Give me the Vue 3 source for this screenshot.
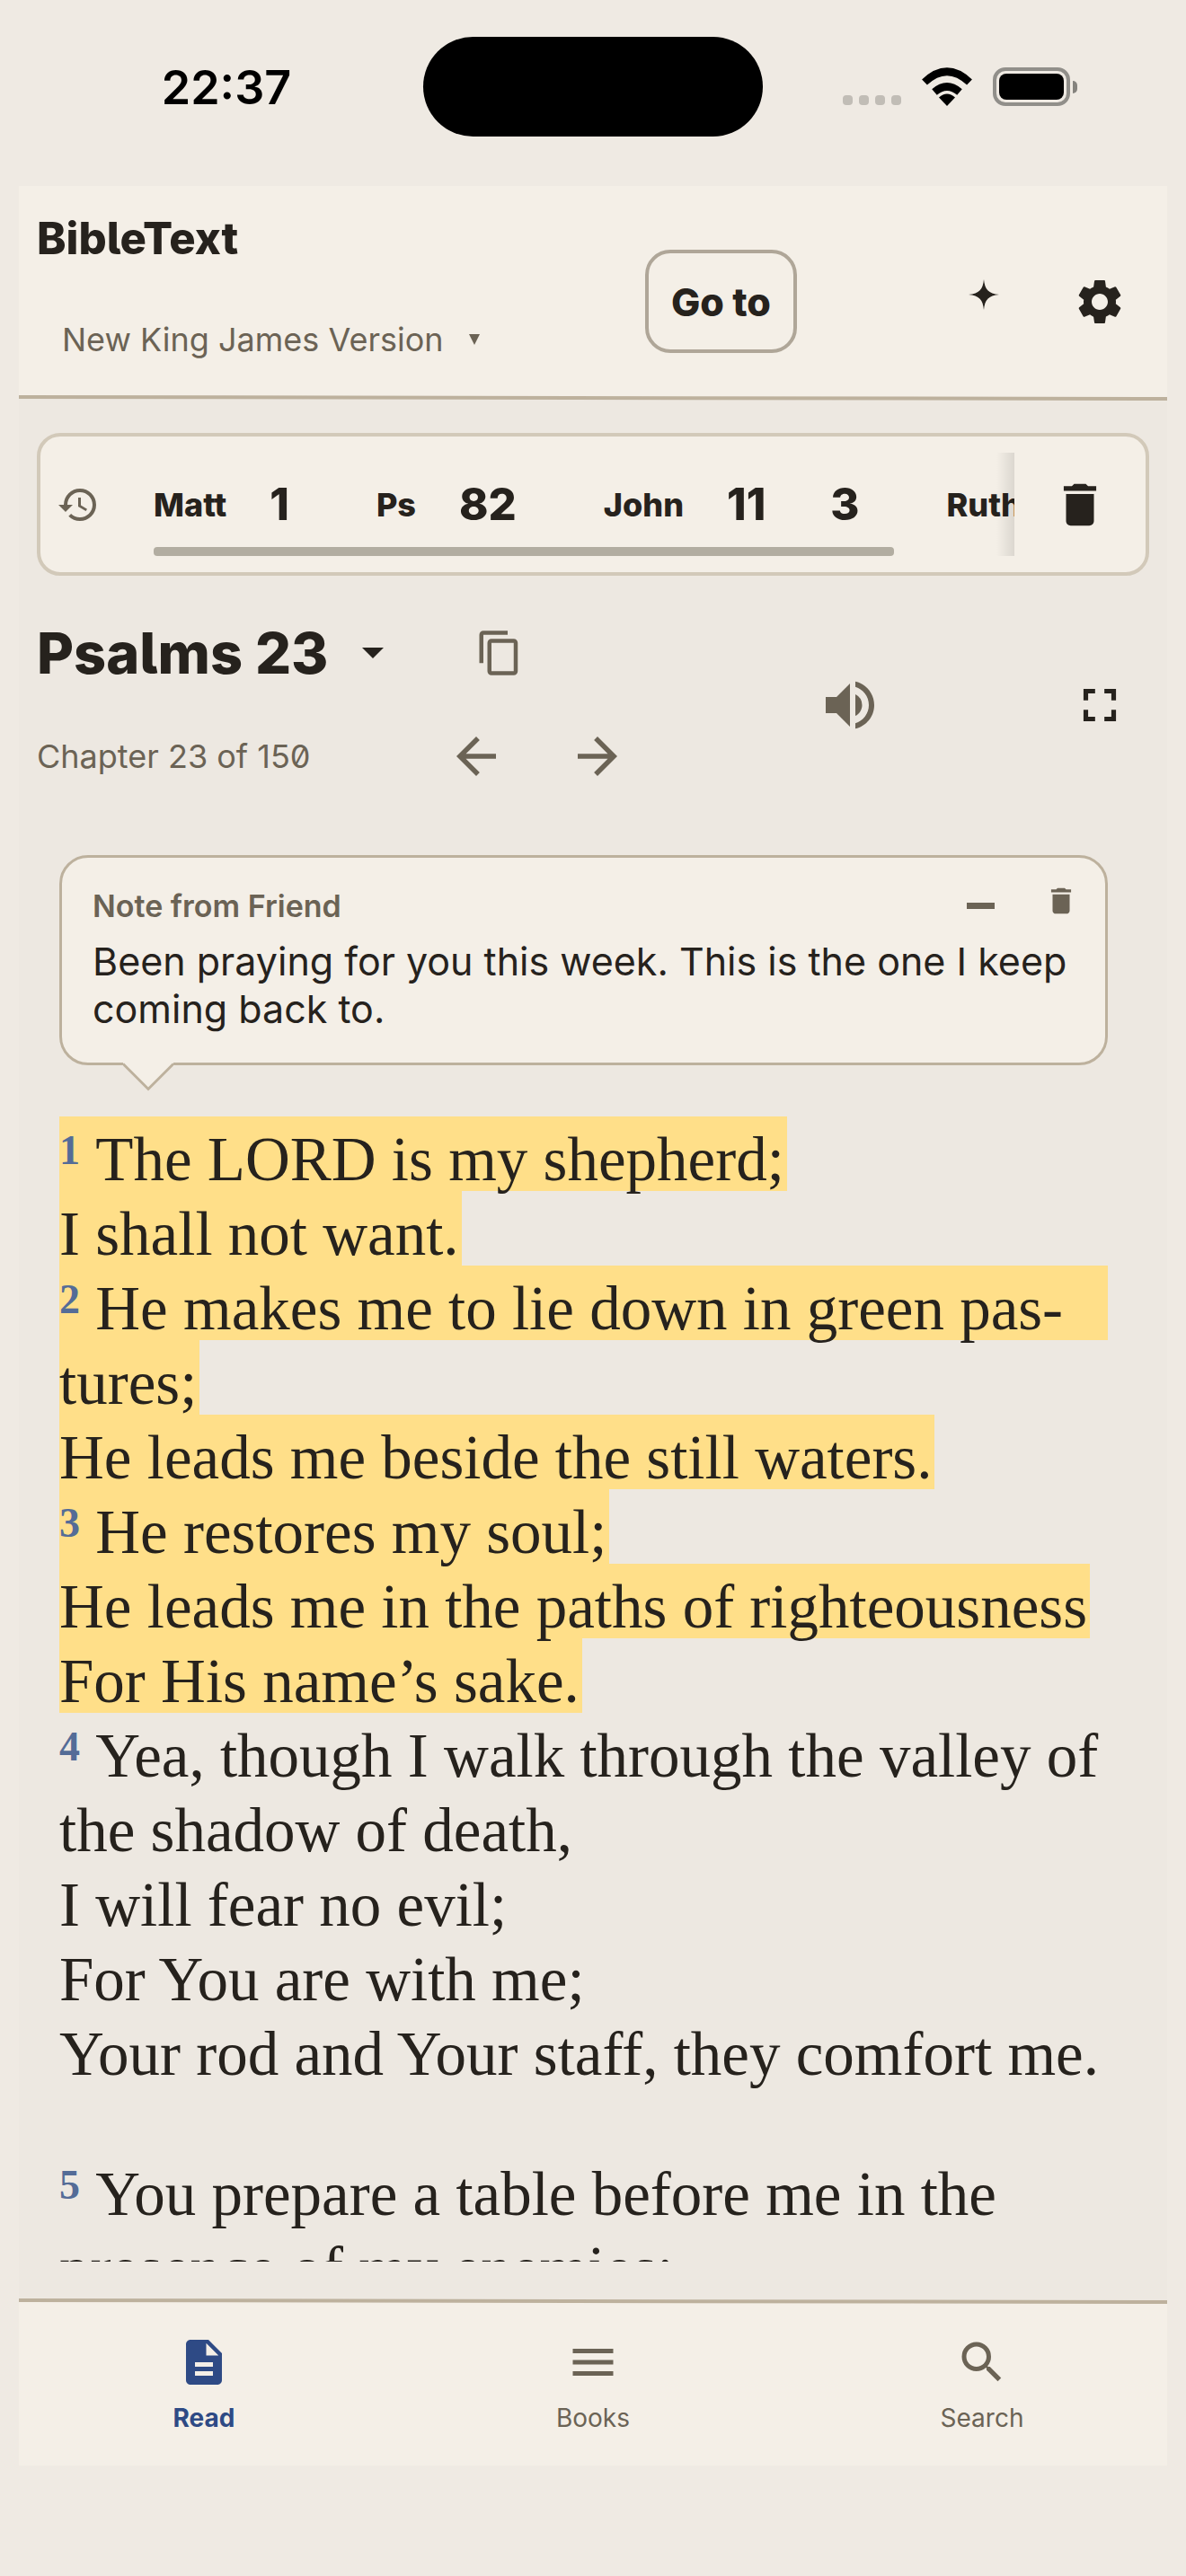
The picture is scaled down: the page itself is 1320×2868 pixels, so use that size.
<script setup>
import { ref } from 'vue'

const version = ref('New King James Version')

const history = [
  { book: 'Matt', chapters: [1] },
  { book: 'Ps', chapters: [82] },
  { book: 'John', chapters: [11, 3] },
  { book: 'Ruth', chapters: [1] },
]

const stanzas = [
  [
    { n: 1, text: 'The LORD is my shepherd;', mark: true },
    { text: 'I shall not want.', mark: true },
    { n: 2, text: 'He makes me to lie down in green pas-', mark: true, full: true },
    { text: 'tures;', mark: true },
    { text: 'He leads me beside the still waters.', mark: true },
    { n: 3, text: 'He restores my soul;', mark: true },
    { text: 'He leads me in the paths of righteousness', mark: true },
    { text: 'For His name’s sake.', mark: true },
    { n: 4, text: 'Yea, though I walk through the valley of' },
    { text: 'the shadow of death,' },
    { text: 'I will fear no evil;' },
    { text: 'For You are with me;' },
    { text: 'Your rod and Your staff, they comfort me.' },
  ],
  [
    { n: 5, text: 'You prepare a table before me in the' },
    { text: 'presence of my enemies;' },
  ],
]

const tabs = [
  { label: 'Read', active: true, icon: 'M14 2H6c-1.1 0-1.99.9-1.99 2L4 20c0 1.1.89 2 1.99 2H18c1.1 0 2-.9 2-2V8l-6-6zm2 16H8v-2h8v2zm0-4H8v-2h8v2zm-3-5V3.5L18.500 9H13z' },
  { label: 'Books', icon: 'M3 18h18v-2H3v2zm0-5h18v-2H3v2zm0-7v2h18V6H3z' },
  { label: 'Search', icon: 'M15.500 14h-.79l-.28-.27A6.470 6.470 0 0 0 16 9.500 6.500 6.500 0 1 0 9.500 16c1.610 0 3.090-.59 4.230-1.570l.27.28v.79l5 4.990L20.490 19l-4.990-5zm-6 0C7.010 14 5 11.990 5 9.500S7.010 5 9.500 5 14 7.010 14 9.500 11.990 14 9.500 14z' },
]

const trash = 'M6 19c0 1.1.9 2 2 2h8c1.1 0 2-.9 2-2V7.400H6V19zM19 4h-3.500l-1-1h-5l-1 1H5v2h14V4z'
</script>

<template>
  <div class="device">
    <div class="status">
      <span class="time">22:37</span>
      <div class="island"></div>
      <div class="indicators">
        <div class="dots"><i v-for="d in 4" :key="d"></i></div>
        <svg class="wifi" viewBox="0 0 58 43" aria-hidden="true">
          <path d="M29 43 L20 33.500 Q29 25.500 38 33.500Z" />
          <path d="M15 28.500 Q29 16.500 43 28.500" fill="none" stroke="#000" stroke-width="8.500" transform="translate(0 -1)" />
          <path d="M4 16.500 Q29 -7 54 16.500" fill="none" stroke="#000" stroke-width="8.500" />
        </svg>
        <div class="battery"><div class="charge"></div></div>
      </div>
    </div>

    <main class="app">
      <header class="top">
        <div class="brand">
          <h2>BibleText</h2>
          <label class="version">
            <select v-model="version" aria-label="Translation">
              <option>New King James Version</option>
            </select>
            <svg width="12" height="12" viewBox="0 0 12 12" aria-hidden="true"><path d="M0 0h12L6 12z" /></svg>
          </label>
        </div>
        <button class="goto">Go to</button>
        <button class="icon-btn star" aria-label="Highlights">
          <svg width="34" height="34" viewBox="0 0 34 34"><path d="M17 0C18 11 22 16 34 17 22 18 18 23 17 34 16 23 12 18 0 17 12 16 16 11 17 0z" /></svg>
        </button>
        <button class="icon-btn" aria-label="Settings">
          <svg width="60" height="60" viewBox="0 0 24 24"><path d="M19.140 12.940c.04-.3.06-.61.06-.94 0-.32-.02-.64-.07-.94l2.030-1.580c.18-.14.23-.41.12-.61l-1.920-3.320c-.12-.22-.37-.29-.59-.22l-2.390.96c-.5-.38-1.030-.7-1.620-.94l-.36-2.540c-.04-.24-.24-.41-.48-.41h-3.840c-.24 0-.43.17-.47.41l-.36 2.540c-.59.24-1.130.57-1.620.94l-2.390-.96c-.22-.08-.47 0-.59.22L2.740 8.870c-.12.21-.08.47.12.61l2.030 1.580c-.05.3-.09.63-.09.94s.02.64.07.94l-2.030 1.580c-.18.14-.23.41-.12.61l1.920 3.320c.12.22.37.29.59.22l2.390-.96c.5.38 1.030.7 1.620.94l.36 2.540c.05.24.24.41.48.41h3.840c.24 0 .44-.17.47-.41l.36-2.540c.59-.24 1.130-.56 1.620-.94l2.390.96c.22.08.47 0 .59-.22l1.920-3.320c.12-.22.07-.47-.12-.61l-2.010-1.580zM12 15.600c-1.980 0-3.600-1.620-3.600-3.600s1.620-3.600 3.600-3.600 3.600 1.620 3.600 3.600-1.620 3.600-3.600 3.600z" /></svg>
        </button>
      </header>
      <svg class="rule" viewBox="0 0 1278 6" preserveAspectRatio="none" aria-hidden="true"><path d="M0 0L1278 2V6L0 4z" /></svg>

      <nav class="history" aria-label="History">
        <svg class="muted" width="48" height="48" viewBox="0 0 24 24" aria-hidden="true"><path d="M13 3a9 9 0 0 0-9 9H1l3.890 3.890.07.14L9 12H6c0-3.870 3.130-7 7-7s7 3.130 7 7-3.130 7-7 7c-1.930 0-3.680-.79-4.940-2.060l-1.420 1.420A8.954 8.954 0 0 0 13 21a9 9 0 0 0 0-18zm-1 5v5l4.280 2.540.72-1.210-3.500-2.080V8H12z" /></svg>
        <div class="track">
          <div class="items">
            <div v-for="h in history" :key="h.book" class="entry">
              <span class="book">{{ h.book }}</span>
              <button v-for="c in h.chapters" :key="c" class="chapter">{{ c }}</button>
            </div>
          </div>
          <div class="fade"></div>
          <div class="thumb"></div>
        </div>
        <button class="icon-btn clear" aria-label="Clear history">
          <svg width="62" height="62" viewBox="0 0 24 24"><path :d="trash" /></svg>
        </button>
      </nav>

      <section class="heading">
        <div class="place">
          <div class="line">
            <h1><button class="picker">Psalms 23
              <svg width="24" height="12" viewBox="0 0 24 12" aria-hidden="true"><path d="M0 0h24L12 12z" /></svg>
            </button></h1>
            <button class="icon-btn muted" aria-label="Copy chapter">
              <svg width="54" height="54" viewBox="0 0 24 24"><path d="M16 1H4c-1.100 0-2 .9-2 2v14h2V3h12V1zm3 4H8c-1.100 0-2 .9-2 2v14c0 1.100.9 2 2 2h11c1.100 0 2-.9 2-2V7c0-1.100-.9-2-2-2zm0 16H8V7h11v14z" /></svg>
            </button>
          </div>
          <div class="line">
            <span class="count">Chapter 23 of 150</span>
            <button class="icon-btn muted" aria-label="Previous chapter">
              <svg width="66" height="66" viewBox="0 0 24 24"><path d="M20 11H7.830l5.590-5.590L12 4l-8 8 8 8 1.410-1.410L7.830 13H20v-2z" /></svg>
            </button>
            <button class="icon-btn muted next" aria-label="Next chapter">
              <svg width="66" height="66" viewBox="0 0 24 24"><path d="M12 4l-1.410 1.410L16.170 11H4v2h12.170l-5.580 5.590L12 20l8-8z" /></svg>
            </button>
          </div>
        </div>
        <div class="tools">
          <button class="icon-btn muted" aria-label="Listen">
            <svg width="72" height="72" viewBox="0 0 24 24"><path d="M3 9v6h4l5 5V4L7 9H3zm13.500 3A4.500 4.500 0 0 0 14 7.970v8.050c1.480-.73 2.500-2.250 2.500-4.020zM14 3.230v2.060c2.890.86 5 3.540 5 6.710s-2.110 5.850-5 6.710v2.060c4.010-.91 7-4.490 7-8.770s-2.990-7.860-7-8.770z" /></svg>
          </button>
          <button class="icon-btn" aria-label="Full screen">
            <svg width="62" height="62" viewBox="0 0 24 24"><path d="M7 14H5v5h5v-2H7v-3zm-2-4h2V7h3V5H5v5zm12 7h-3v2h5v-5h-2v3zM14 5v2h3v3h2V5h-5z" /></svg>
          </button>
        </div>
      </section>

      <article class="reader">
        <aside class="note">
          <div class="note-head">
            <span class="from">Note from Friend</span>
            <button class="icon-btn muted" aria-label="Collapse note">
              <svg width="31" height="7" viewBox="0 0 31 7"><path d="M0 0h31v7H0z" /></svg>
            </button>
            <button class="icon-btn muted bin" aria-label="Delete note">
              <svg width="38" height="38" viewBox="0 0 24 24"><path :d="trash" /></svg>
            </button>
          </div>
          <p>Been praying for you this week. This is the one I keep coming back to.</p>
          <svg class="tail" width="56" height="32" viewBox="0 0 56 32" aria-hidden="true"><path d="M0 0h56v1L28 30 0 1z" fill="#f4efe7" /><path d="M0 1.500L28 29.500L56 1.500" fill="none" stroke="#bdb19d" stroke-width="3" /></svg>
        </aside>

        <div v-for="(stanza, s) in stanzas" :key="s" class="stanza">
          <p v-for="(l, i) in stanza" :key="i" :class="['verse', { mark: l.mark, full: l.full }]"><template v-if="l.n"><sup>{{ l.n }}</sup>&nbsp;</template>{{ l.text }}</p>
        </div>
      </article>

      <svg class="rule" viewBox="0 0 1278 6" preserveAspectRatio="none" aria-hidden="true"><path d="M0 3L1278 6H0z" fill="#f4efe7" /><path d="M0 0L1278 2V6L0 4z" /></svg>
      <nav class="tabs" aria-label="Main">
        <button v-for="t in tabs" :key="t.label" :class="['tab', { active: t.active }]">
          <svg width="60" height="60" viewBox="0 0 24 24" aria-hidden="true"><path :d="t.icon" /></svg>
          <span>{{ t.label }}</span>
        </button>
      </nav>
    </main>
  </div>
</template>

<style>
body {
  margin: 0;
  background: #efeae3;
}
</style>

<style scoped>
.device {
  box-sizing: border-box;
  height: 100vh;
  display: flex;
  flex-direction: column;
  padding: 0 21px 123px;
  background: #efeae3;
  color: #26221d;
  font-family: Inter, "Noto Sans", sans-serif;
  font-feature-settings: "zero", "cv05";
}
svg {
  display: block;
  flex: none;
  fill: currentColor;
}
button,
select {
  appearance: none;
  border: 0;
  margin: 0;
  padding: 0;
  background: none;
  color: inherit;
  font: inherit;
  font-feature-settings: inherit;
  cursor: pointer;
}
h1,
h2,
p {
  margin: 0;
}
.muted {
  color: #6b6355;
}
.icon-btn {
  display: flex;
  align-items: center;
  justify-content: center;
}

/* status bar */
.status {
  flex: none;
  display: grid;
  grid-template-columns: 1fr 378px 1fr;
  align-items: start;
  height: 166px;
  padding-top: 41px;
  color: #000;
}
.time {
  justify-self: center;
  padding-left: 12px;
  font-size: 52px;
  font-weight: 600;
  line-height: 114px;
}
.island {
  height: 111px;
  border-radius: 56px;
  background: #000;
}
.indicators {
  display: flex;
  justify-content: flex-end;
  align-items: center;
  gap: 22px;
  height: 111px;
  padding-right: 101px;
}
.dots {
  display: flex;
  gap: 7px;
  padding-top: 30px;
}
.dots i {
  width: 11px;
  height: 11px;
  border-radius: 4px;
  background: #c1bdb6;
}
.wifi {
  width: 58px;
  height: 43px;
}
.battery {
  position: relative;
  box-sizing: border-box;
  width: 86px;
  height: 43px;
  margin-right: 7px;
  padding: 3px;
  border: 4px solid #918f8a;
  border-radius: 14px;
}
.battery::after {
  content: "";
  position: absolute;
  right: -12px;
  top: 11px;
  width: 5px;
  height: 14px;
  border-radius: 0 5px 5px 0;
  background: #85837e;
}
.charge {
  height: 100%;
  border-radius: 8px;
  background: #000;
}

/* app shell */
.app {
  flex: 1;
  min-height: 0;
  display: flex;
  flex-direction: column;
  background: #ede8e1;
}
.top {
  flex: none;
  display: flex;
  align-items: center;
  height: 209px;
  padding: 24px 27px 0 20px;
  background: #f4efe7;
}
.brand {
  flex: 1;
  align-self: stretch;
}
.brand h2 {
  font-size: 49px;
  font-weight: 800;
  line-height: 70px;
}
.version {
  display: flex;
  align-items: center;
  gap: 28px;
  margin-top: 52px;
  padding-left: 28px;
  color: #6b6355;
}
.version select {
  font-size: 36px;
  line-height: 50px;
}
.goto {
  box-sizing: border-box;
  width: 169px;
  height: 115px;
  margin-right: 160px;
  border: 4px solid #afa698;
  border-radius: 28px;
  font-size: 43px;
  font-weight: 800;
}
.top .icon-btn {
  width: 96px;
  height: 96px;
}
.top .star {
  margin-right: 33px;
  padding-bottom: 16px;
}
.rule {
  flex: none;
  width: 100%;
  height: 6px;
  color: #bdb19d;
}
.top + .rule {
  background: linear-gradient(#f4efe7 50%, #ede8e1 50%);
}

/* history strip */
.history {
  flex: none;
  display: flex;
  align-items: center;
  margin: 36px 20px 0 20px;
  padding: 18px 0 18px 18px;
  border: 4px solid #d2c9b9;
  border-radius: 26px;
  background: #f4efe7;
}
.track {
  position: relative;
  flex: 1;
  min-width: 0;
  margin-left: 60px;
}
.items {
  display: flex;
  align-items: center;
  gap: 61px;
  height: 115px;
  overflow-x: auto;
  scrollbar-width: none;
}
.entry {
  display: flex;
  align-items: center;
}
.book {
  margin-right: 12px;
  font-size: 36px;
  font-weight: 800;
}
.chapter {
  padding: 0 36px;
  font-size: 49px;
  font-weight: 800;
}
.fade {
  position: absolute;
  top: 0;
  right: 0;
  width: 20px;
  height: 100%;
  background: linear-gradient(90deg, rgba(0, 0, 0, 0), rgba(0, 0, 0, 0.1));
}
.thumb {
  position: absolute;
  left: 0;
  bottom: 0;
  width: 86%;
  height: 10px;
  border-radius: 4px;
  background: #b2ada1;
}
.clear {
  width: 146px;
}

/* chapter heading */
.heading {
  flex: none;
  display: flex;
  align-items: center;
  justify-content: space-between;
  margin-top: 54px;
  padding: 0 44px 0 20px;
}
.place {
  display: flex;
  flex-direction: column;
  gap: 51px;
}
.line {
  display: flex;
  align-items: center;
  height: 64px;
}
.picker {
  display: flex;
  align-items: center;
  gap: 38px;
  margin-right: 102px;
  font-size: 63px;
  font-weight: 800;
  line-height: 64px;
}
.count {
  margin-right: 151px;
  font-size: 36px;
  color: #6b6355;
}
.next {
  margin-left: 69px;
}
.tools {
  display: flex;
  align-items: center;
  gap: 211px;
}

/* reader */
.reader {
  flex: 1;
  min-height: 0;
  margin: 78px 66px 41px 45px;
  overflow-y: auto;
  scrollbar-width: none;
}
.note {
  position: relative;
  margin-bottom: 57px;
  padding: 29px 30px 33px 34px;
  border: 3px solid #bdb19d;
  border-radius: 32px;
  background: #f4efe7;
}
.note-head {
  display: flex;
  align-items: center;
  height: 48px;
  margin-bottom: 12px;
}
.from {
  flex: 1;
  font-size: 34px;
  font-weight: 600;
  color: #6b6355;
}
.bin {
  align-self: flex-start;
  margin-left: 55px;
}
.note p {
  font-size: 43px;
  line-height: 53px;
}
.tail {
  position: absolute;
  left: 68px;
  top: 100%;
}
.stanza {
  margin-bottom: 73px;
}
.verse {
  width: fit-content;
  padding: 14px 3px 0 0;
  font-family: "Liberation Serif", serif;
  font-size: 69px;
  line-height: 69px;
  white-space: nowrap;
}
.verse.mark {
  background: #ffdf89;
}
.verse.full {
  width: 100%;
  box-sizing: border-box;
}
sup {
  font-size: 46px;
  font-weight: 700;
  line-height: 0;
  vertical-align: 18px;
  color: #546c97;
}

/* bottom tabs */
.tabs {
  flex: none;
  display: flex;
  justify-content: space-between;
  padding: 35px 126px 32px;
  background: #f4efe7;
}
.tab {
  display: flex;
  flex-direction: column;
  align-items: center;
  gap: 12px;
  width: 160px;
  font-size: 28px;
  line-height: 41px;
  color: #6b6355;
}
.tab.active {
  color: #2e4a85;
  font-weight: 700;
}
</style>
